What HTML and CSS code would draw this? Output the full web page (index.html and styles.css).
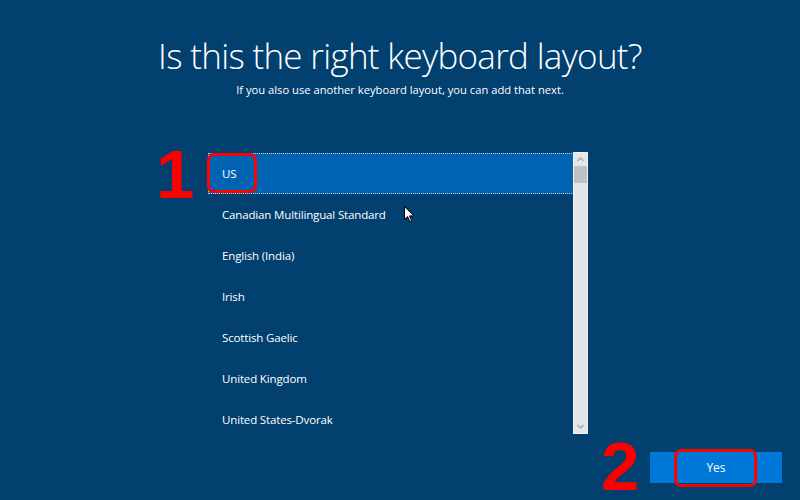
FILE: index.html
```html
<!DOCTYPE html>
<html lang="en">
<head>
  <meta charset="UTF-8">
  <title>Keyboard layout</title>
  <link rel="stylesheet" href="styles.css">
</head>
<body>

  <div id="page">

    <h1 class="title">Is this the right keyboard layout?</h1>
    <p class="subtitle">If you also use another keyboard layout, you can add that next.</p>

    <div class="listbox">
      <ul class="items">
        <li class="item selected">US</li>
        <li class="item">Canadian Multilingual Standard</li>
        <li class="item">English (India)</li>
        <li class="item">Irish</li>
        <li class="item">Scottish Gaelic</li>
        <li class="item">United Kingdom</li>
        <li class="item">United States-Dvorak</li>
      </ul>
      <div class="scrollbar">
        <svg class="arrow" width="13" height="13" viewBox="0 0 13 13">
          <path d="M3.5 8 L6.5 5 L9.5 8" fill="none" stroke="#a6a6a6" stroke-width="1.3"/>
        </svg>
        <div class="thumb"></div>
        <div class="track"></div>
        <svg class="arrow" width="13" height="13" viewBox="0 0 13 13">
          <path d="M3.5 5 L6.5 8 L9.5 5" fill="none" stroke="#a6a6a6" stroke-width="1.3"/>
        </svg>
      </div>
    </div>

    <div class="footer">
      <button class="yes">Yes</button>
    </div>

    <!-- annotations drawn over the screenshot -->
    <div class="mark mark-one">1</div>
    <div class="mark mark-two">2</div>
    <div class="ring ring-us"></div>
    <div class="ring ring-yes"></div>
    <svg class="cursor" width="12" height="18" viewBox="0 0 12 18">
      <path d="M0.5 0.5 L0.5 13.5 L3.6 10.6 L5.8 15.6 L7.6 14.8 L5.5 9.9 L9.8 9.9 Z" fill="#fff" stroke="#000" stroke-width="1"/>
    </svg>

  </div>

</body>
</html>
```

FILE: styles.css
```css
body {
  margin: 0;
  padding: 0;
  background-color: #02406f;
  font-family: "Open Sans", "Noto Sans", sans-serif;
  color: white;
}

#page {
  position: relative;
  width: 800px;
  height: 500px;
  overflow: hidden;
  display: flex;
  flex-direction: column;
}

.title {
  margin: 31px 0 0 0;
  font-size: 35px;
  font-weight: 300;
  line-height: 49px;
  text-align: center;
  letter-spacing: -0.7px;
}

.subtitle {
  margin: 2px 0 0 0;
  font-size: 11.2px;
  line-height: 16px;
  text-align: center;
}

.listbox {
  display: flex;
  width: 379px;
  height: 280px;
  margin: 55px auto 0 208px;
}

.items {
  flex: 1;
  list-style-type: none;
  margin: 0;
  padding: 0;
}

.item {
  height: 41px;
  line-height: 41px;
  padding-left: 14px;
  font-size: 11.5px;
  letter-spacing: -0.15px;
  box-sizing: border-box;
}

.selected {
  background-color: #0063b1;
  border: 1px dotted #c8d6e4;
  padding-left: 13px;
  line-height: 39px;
}

.scrollbar {
  width: 13px;
  display: flex;
  flex-direction: column;
  background-color: #e6e6e6;
  box-shadow: 0 0 0 1px #f2f2f2;
}

.arrow {
  display: block;
}

.thumb {
  height: 17px;
  background-color: #c2c2c2;
}

.track {
  flex: 1;
}

.footer {
  display: flex;
  justify-content: flex-end;
  padding: 19px 18px 0 0;
}

.yes {
  width: 132px;
  height: 31px;
  background-color: #0078d7;
  color: white;
  border: none;
  font-family: "Open Sans", "Noto Sans", sans-serif;
  font-size: 12px;
  padding: 0;
}

.mark {
  position: absolute;
  color: #ff0000;
  font-family: "Liberation Sans", Arial, sans-serif;
  font-weight: bold;
  font-size: 69px;
  line-height: 56px;
}

.mark-one {
  left: 156px;
  top: 147px;
}

.mark-two {
  left: 601px;
  top: 439px;
}

.ring {
  position: absolute;
  border: 3px solid #ff0000;
  border-radius: 7px;
  box-sizing: border-box;
}

.ring-us {
  left: 207px;
  top: 153px;
  width: 50px;
  height: 40px;
}

.ring-yes {
  left: 674px;
  top: 449px;
  width: 83px;
  height: 38px;
}

.cursor {
  position: absolute;
  left: 404px;
  top: 206px;
}
```
